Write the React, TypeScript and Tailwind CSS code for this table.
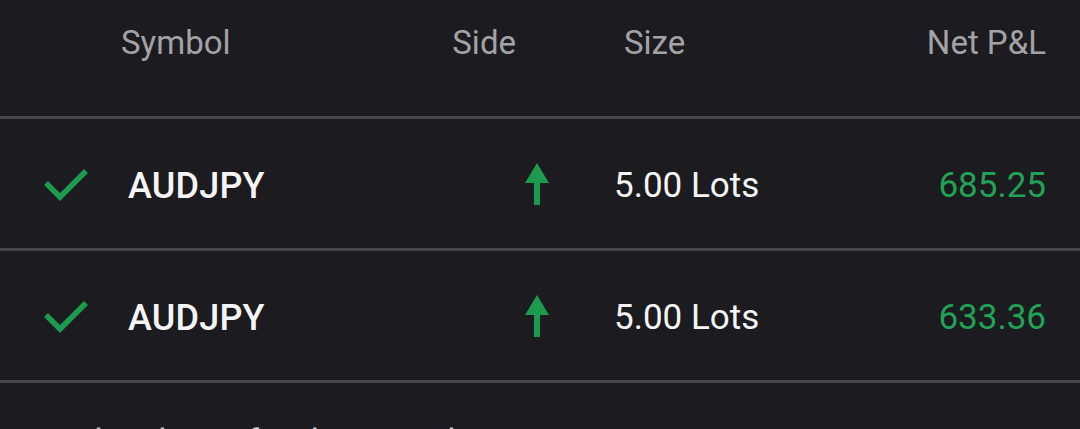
import React from 'react';

interface Position {
  id: number;
  symbol: string;
  size: string;
  pnl: string;
}

const positions: Position[] = [
  { id: 1, symbol: 'AUDJPY', size: '5.00 Lots', pnl: '685.25' },
  { id: 2, symbol: 'AUDJPY', size: '5.00 Lots', pnl: '633.36' },
];

function CheckIcon() {
  return (
    <svg width="44" height="36" viewBox="0 0 44 36" fill="none">
      <polyline points="2,17 16,31 42,5" stroke="#1c9a4d" strokeWidth="5.5" strokeLinejoin="miter" />
    </svg>
  );
}

function UpArrow() {
  return (
    <svg width="24" height="42" viewBox="0 0 24 42">
      <polygon points="12,0 24,20 0,20" fill="#1c9a4d" />
      <rect x="9" y="19" width="6" height="23" fill="#1c9a4d" />
    </svg>
  );
}

export default function App() {
  const renderRow = (p: Position) => (
    <div key={p.id} className="flex h-[132px] items-center border-b-[3px] border-[#48474c] text-[35px] leading-[40px]">
      <div className="flex w-[128px] pl-[44px]">
        <CheckIcon />
      </div>
      <div className="w-[396px] pt-[5px] text-[36px] font-medium tracking-[0.2px] text-[#f4f4f4]">{p.symbol}</div>
      <div className="flex w-[90px] pl-[1px]">
        <UpArrow />
      </div>
      <div className="flex-1 pt-[5px] text-[#f4f4f4]">{p.size}</div>
      <div className="pr-[34px] pt-[5px] text-right text-[#21a356]">{p.pnl}</div>
    </div>
  );

  return (
    <div className="h-[429px] w-[1080px] overflow-hidden bg-[#1c1b20] font-['Roboto',sans-serif]">
      <div className="flex h-[119px] border-b-[3px] border-[#48474c] pt-[23px] text-[33px] leading-[40px] text-[#a3a3a6]">
        <div className="w-[121px]" />
        <div className="w-[395px]">Symbol</div>
        <div className="w-[0px] flex justify-end whitespace-nowrap">Side</div>
        <div className="w-[108px]" />
        <div className="flex-1">Size</div>
        <div className="pr-[34px]">Net P&amp;L</div>
      </div>
      {positions.map(renderRow)}
      <div className="flex justify-between pl-[35px] pr-[34px] pt-[40px] text-[35px] leading-[40px]">
        <span className="text-[#c8c8cb]">Realized P&amp;L for the period</span>
        <span className="text-[#21a356]">1,318.61</span>
      </div>
    </div>
  );
}
